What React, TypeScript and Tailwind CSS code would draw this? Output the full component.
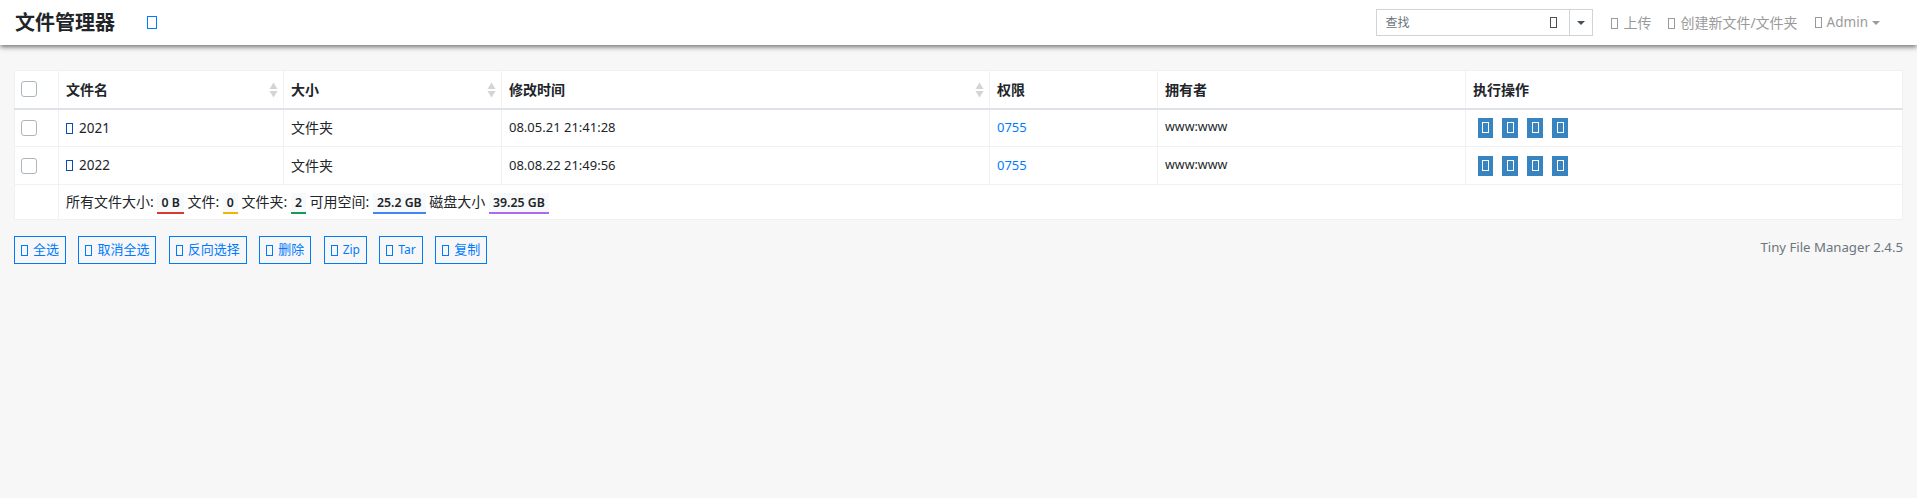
const sans = "font-['Noto_Sans','Noto_Sans_CJK_SC',sans-serif]";

function Tofu({ className = '' }: { className?: string }) {
  return <span className={`inline-block w-[7px] h-[11px] border border-current align-[-1px] ${className}`} />;
}

function SortArrows() {
  return (
    <svg width="9" height="16" viewBox="0 0 9 16" className="absolute right-[5px] top-[11px]">
      <path d="M4.5 0.5 8.5 7H0.5Z" fill="#d4d4d4" />
      <path d="M4.5 15.5 8.5 9H0.5Z" fill="#d4d4d4" />
    </svg>
  );
}

function Check() {
  return <span className="block w-4 h-4 rounded-[3px] border border-[#adb5bd] bg-white ml-[6px]" />;
}

function Stat({ value, color }: { value: string; color: string }) {
  return <span className={`px-[4px] py-[1px] bg-[#f8f9fa] font-semibold text-[12.3px] border-b-2 ${color}`}>{value}</span>;
}

const rows = [
  { name: '2021', time: '08.05.21 21:41:28' },
  { name: '2022', time: '08.08.22 21:49:56' },
];

const actions = ['全选', '取消全选', '反向选择', '删除', 'Zip', 'Tar', '复制'];
const actionWidths = ['w-[15px]', 'w-4', 'w-4', 'w-4'];

export default function App() {
  return (
    <div className={`min-h-[498px] bg-[#f7f7f7] text-[#212529] ${sans}`}>
      <header className="h-[45px] bg-white shadow-[0_2px_5px_rgba(0,0,0,0.55)] flex items-center pl-[15px] pr-[37px]">
        <h1 className="text-[20px] font-semibold leading-none text-[#212529]">文件管理器</h1>
        <Tofu className="ml-[32px] !w-[10px] !h-[13px] text-[#007bff]" />
        <div className="ml-auto flex items-center text-[14px] text-[#9a9a9a]">
          <div className="flex h-[27px] w-[217px] border border-[#ced4da] text-[#6c757d] text-[12px]">
            <div className="flex-1 flex items-center justify-between px-2 pr-[12px]">
              <span>查找</span>
              <Tofu className="text-[#495057]" />
            </div>
            <div className="w-[23px] border-l border-[#ced4da] flex items-center justify-center">
              <span className="border-x-[4px] border-x-transparent border-t-[4px] border-t-[#495057]" />
            </div>
          </div>
          <span className="ml-[18px]"><Tofu className="mr-[5px]" />上传</span>
          <span className="ml-[17px]"><Tofu className="mr-[5px]" />创建新文件/文件夹</span>
          <span className="ml-[17px] flex items-center text-[13.5px]">
            <Tofu className="mr-[5px]" />Admin
            <span className="ml-[4px] border-x-[4px] border-x-transparent border-t-[4px] border-t-[#9a9a9a]" />
          </span>
        </div>
      </header>

      <main className="px-[14px] pt-[25px]">
        <table className="w-[1889px] table-fixed bg-white border border-[#f1f1f1] border-collapse text-[14px]">
          <colgroup>
            <col className="w-[44px]" />
            <col className="w-[225px]" />
            <col className="w-[218px]" />
            <col className="w-[488px]" />
            <col className="w-[168px]" />
            <col className="w-[308px]" />
            <col />
          </colgroup>
          <thead>
            <tr className="h-[38px] border-b-2 border-[#dee2e6] font-semibold">
              <th className="border-r border-[#f1f1f1] text-left font-normal"><Check /></th>
              <th className="relative border-r border-[#f1f1f1] px-[7px] text-left font-semibold">文件名<SortArrows /></th>
              <th className="relative border-r border-[#f1f1f1] px-[7px] text-left font-semibold">大小<SortArrows /></th>
              <th className="relative border-r border-[#f1f1f1] px-[7px] text-left font-semibold">修改时间<SortArrows /></th>
              <th className="border-r border-[#f1f1f1] px-[7px] text-left font-semibold">权限</th>
              <th className="border-r border-[#f1f1f1] px-[7px] text-left font-semibold">拥有者</th>
              <th className="px-[7px] text-left font-semibold">执行操作</th>
            </tr>
          </thead>
          <tbody>
            {rows.map((row) => (
              <tr key={row.name} className="h-[38px] border-b border-[#f1f1f1]">
                <td className="border-r border-[#f1f1f1]"><Check /></td>
                <td className="border-r border-[#f1f1f1] px-[7px] text-[13.5px]"><Tofu className="mr-[6px] text-[#0b4fa8]" />{row.name}</td>
                <td className="border-r border-[#f1f1f1] px-[7px]">文件夹</td>
                <td className="border-r border-[#f1f1f1] px-[7px] text-[13px]">{row.time}</td>
                <td className="border-r border-[#f1f1f1] px-[7px] text-[13px] text-[#007bff]">0755</td>
                <td className="border-r border-[#f1f1f1] px-[7px] text-[12.5px]">www:www</td>
                <td className="px-[7px]">
                  <div className="flex gap-[9px] pl-[5px]">
                    {actionWidths.map((w, i) => (
                      <span key={i} className={`${w} h-5 bg-[#3884c0] flex items-center justify-center text-white`}>
                        <Tofu />
                      </span>
                    ))}
                  </div>
                </td>
              </tr>
            ))}
            <tr className="h-[35px]">
              <td className="border-r border-[#f1f1f1]" />
              <td colSpan={6} className="px-[7px]">
                所有文件大小: <Stat value="0 B" color="border-[#d93a2b]" /> 文件: <Stat value="0" color="border-[#f4b400]" /> 文件夹: <Stat value="2" color="border-[#0f9d58]" /> 可用空间: <Stat value="25.2 GB" color="border-[#4285f4]" /> 磁盘大小 <Stat value="39.25 GB" color="border-[#a86cf0]" />
              </td>
            </tr>
          </tbody>
        </table>

        <div className="mt-[16px] flex items-start justify-between">
          <div className="flex gap-[12.4px]">
            {actions.map((label) => (
              <span key={label} className="h-[28px] px-[6px] flex items-center border border-[#007bff] text-[#007bff] text-[13px] whitespace-nowrap">
                <Tofu className="mr-[5px]" /><span className={/[a-z]/i.test(label) ? 'text-[12px]' : ''}>{label}</span>
              </span>
            ))}
          </div>
          <span className="text-[13.2px] text-[#6c757d] pt-[2px]">Tiny File Manager 2.4.5</span>
        </div>
      </main>
    </div>
  );
}
